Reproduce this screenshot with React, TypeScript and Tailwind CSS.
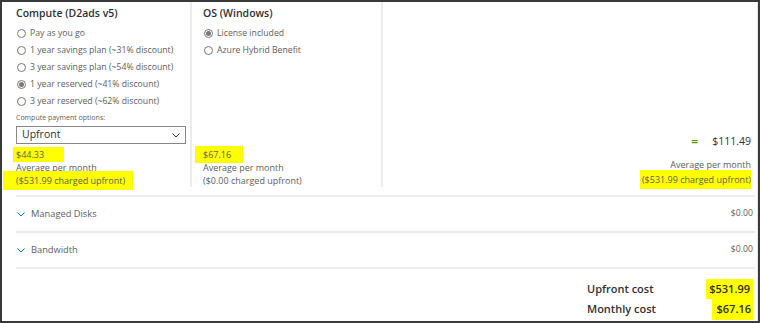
import React from "react";

const font = { fontFamily: '"Open Sans", "Noto Sans", sans-serif' };

function Radio({ checked, label }: { checked?: boolean; label: string }) {
  return (
    <div className="flex items-center h-[17px] text-[8.7px] text-[#605e5c]">
      <span className="w-[9px] h-[9px] rounded-full border border-[#7a7876] flex items-center justify-center mr-[4px] ml-[1px]">
        {checked && <span className="w-[5px] h-[5px] rounded-full bg-[#7a7876]" />}
      </span>
      <span>{label}</span>
    </div>
  );
}

function Chevron({ className }: { className?: string }) {
  return (
    <svg width="8" height="5" viewBox="0 0 8 5" className={className}>
      <path d="M0.5 0.5 L4 4 L7.5 0.5" fill="none" stroke="currentColor" strokeWidth="1" />
    </svg>
  );
}

function Hl({ children, className }: { children: React.ReactNode; className?: string }) {
  return <span className={"bg-[#ffff00] " + (className || "")}>{children}</span>;
}

export default function App() {
  return (
    <div
      style={font}
      className="w-[760px] h-[323px] bg-white border-t-[2px] border-l-[2px] border-r-[2px] border-b-[2px] border-[#3a3a3a] overflow-hidden text-[#323130]"
    >
      <div className="flex flex-col h-full pl-[14px] pr-[2px] border-r border-[#e6e6e6]">
        {/* Top section */}
        <div className="flex h-[185px] pr-[2px]">
          {/* Compute */}
          <div className="w-[176px] flex flex-col pt-[2px] border-r-[2px] border-[#ececec]">
            <div className="text-[10.5px] font-semibold h-[18px] leading-[18px]">Compute (D2ads v5)</div>
            <div className="mt-[3px]">
              <Radio label="Pay as you go" />
              <Radio label="1 year savings plan (~31% discount)" />
              <Radio label="3 year savings plan (~54% discount)" />
              <Radio checked label="1 year reserved (~41% discount)" />
              <Radio label="3 year reserved (~62% discount)" />
            </div>
            <div className="text-[7px] text-[#605e5c] mt-[3px] leading-[9px]">Compute payment options:</div>
            <div className="mt-[4px] w-[170px] h-[21px] border border-[#8a8886] flex items-center justify-between px-[5px]">
              <span className="text-[10.5px] text-[#323130]">Upfront</span>
              <Chevron className="text-[#323130]" />
            </div>
            <div className="text-[9px] text-[#605e5c] leading-[13px] mt-[4px]">
              <div><Hl className="pl-[3px] -ml-[3px] pr-[20px] py-[1px]">$44.33</Hl></div>
              <div>Average per month</div>
              <div className="-ml-[13px]"><Hl className="pl-[13px] pr-[8px] py-[3px]">($531.99 charged upfront)</Hl></div>
            </div>
          </div>
          {/* OS */}
          <div className="w-[191px] flex flex-col pt-[2px] pl-[11px] border-r-[2px] border-[#ececec]">
            <div className="text-[10.5px] font-semibold h-[18px] leading-[18px]">OS (Windows)</div>
            <div className="mt-[3px]">
              <Radio checked label="License included" />
              <Radio label="Azure Hybrid Benefit" />
            </div>
            <div className="flex-1" />
            <div className="text-[9px] text-[#605e5c] leading-[13px] mb-[0px]">
              <div><Hl className="pl-[8px] -ml-[8px] pr-[12px] py-[2px]">$67.16</Hl></div>
              <div>Average per month</div>
              <div>($0.00 charged upfront)</div>
            </div>
          </div>
          {/* Total */}
          <div className="flex-1 flex flex-col items-end justify-end pb-[0px] pr-[2px]">
            <div className="flex items-center gap-[14px] text-[10.5px] text-[#323130]">
              <span className="text-[#57a300] font-bold text-[12px]">=</span>
              <span>$111.49</span>
            </div>
            <div className="text-[9px] text-[#605e5c] leading-[15px] mt-[6px]">Average per month</div>
            <div className="text-[9px] text-[#605e5c] leading-[15px]"><Hl className="py-[3px] pl-[2px]">($531.99 charged upfront)</Hl></div>
          </div>
        </div>
        <div className="h-[8px]" />
        {/* Rows */}
        <div className="border-t-[2px] border-[#ececec] h-[36px] flex items-center justify-between pr-[2px]">
          <div className="flex items-center">
            <Chevron className="text-[#0078d4] ml-[1px] mr-[6px]" />
            <span className="text-[9.3px] text-[#605e5c]">Managed Disks</span>
          </div>
          <span className="text-[8.7px] text-[#605e5c]">$0.00</span>
        </div>
        <div className="border-t-[2px] border-[#ececec] h-[36px] flex items-center justify-between pr-[2px]">
          <div className="flex items-center">
            <Chevron className="text-[#0078d4] ml-[1px] mr-[6px]" />
            <span className="text-[9.3px] text-[#605e5c]">Bandwidth</span>
          </div>
          <span className="text-[8.7px] text-[#605e5c]">$0.00</span>
        </div>
        <div className="border-t-[2px] border-[#ececec] flex-1 flex flex-col items-end pt-[10px] pr-[2px]">
          <div className="w-[166px] flex justify-between items-center h-[20px] text-[11px] font-semibold text-[#323130]">
            <span>Upfront cost</span>
            <Hl className="px-[3px] py-[2px]">$531.99</Hl>
          </div>
          <div className="w-[166px] flex justify-between items-center h-[20px] text-[11px] font-semibold text-[#323130]">
            <span>Monthly cost</span>
            <Hl className="pl-[5px] pr-[2px] py-[3px]">$67.16</Hl>
          </div>
        </div>
      </div>
    </div>
  );
}
